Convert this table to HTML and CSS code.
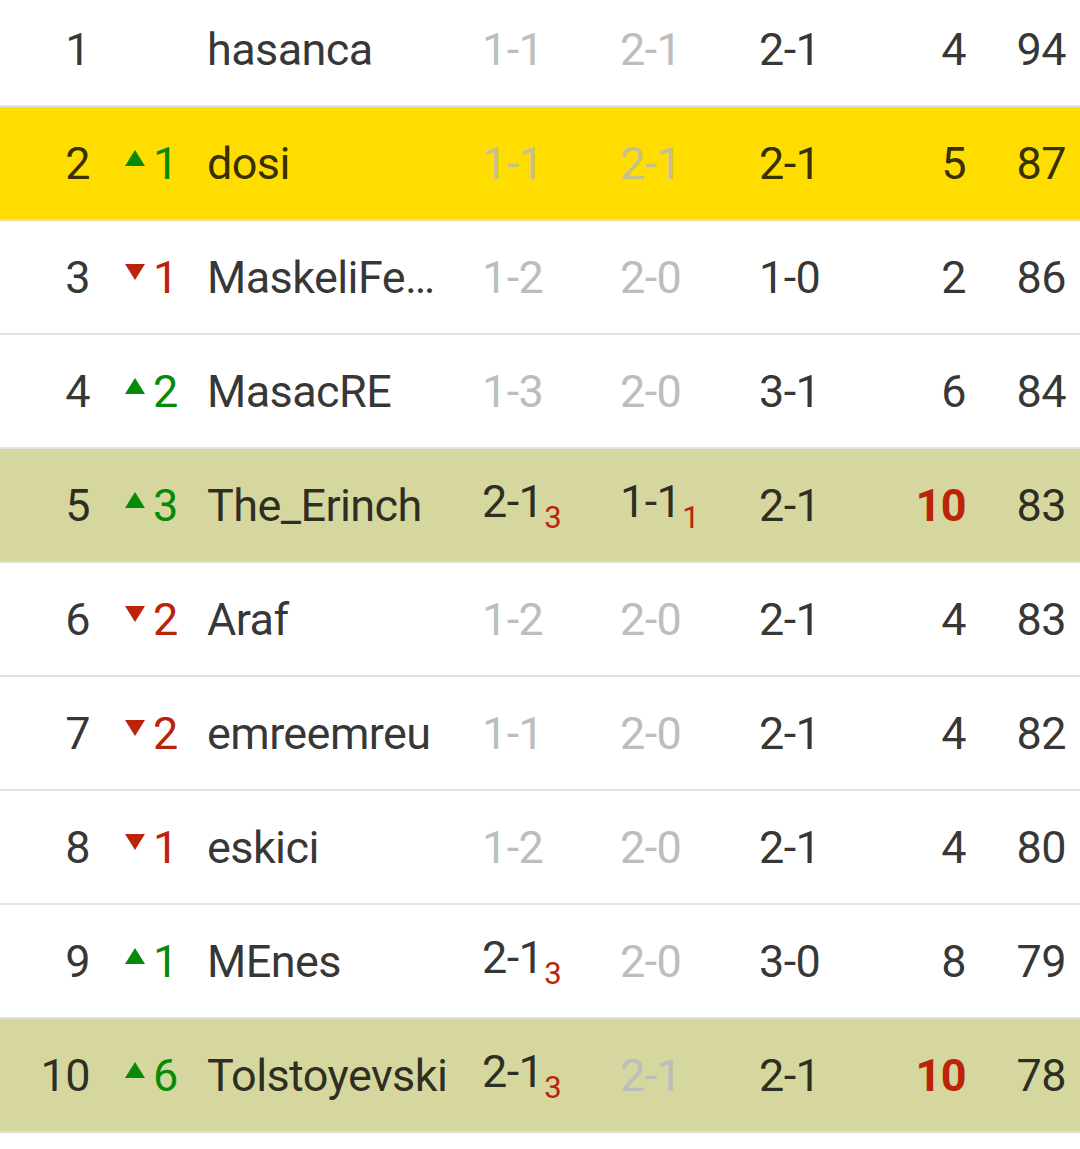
FILE: index.html
```html
<!DOCTYPE html>
<html>
<head>
<meta charset="utf-8">
<link rel="stylesheet" href="styles.css">
</head>
<body>
<div class="table">
  <div class="row">
    <div class="rank">1</div><div class="chg"></div><div class="name">hasanca</div>
    <div class="sc dim">1-1</div><div class="sc dim">2-1</div><div class="sc">2-1</div>
    <div class="pts">4</div><div class="tot">94</div>
  </div>
  <div class="row me">
    <div class="rank">2</div><div class="chg up"><svg class="tri" viewBox="0 0 20 16"><polygon points="10,0 20,16 0,16"/></svg>1</div><div class="name">dosi</div>
    <div class="sc dim">1-1</div><div class="sc dim">2-1</div><div class="sc">2-1</div>
    <div class="pts">5</div><div class="tot">87</div>
  </div>
  <div class="row">
    <div class="rank">3</div><div class="chg down"><svg class="tri" viewBox="0 0 20 16"><polygon points="0,0 20,0 10,16"/></svg>1</div><div class="name trunc">MaskeliFener</div>
    <div class="sc dim">1-2</div><div class="sc dim">2-0</div><div class="sc">1-0</div>
    <div class="pts">2</div><div class="tot">86</div>
  </div>
  <div class="row">
    <div class="rank">4</div><div class="chg up"><svg class="tri" viewBox="0 0 20 16"><polygon points="10,0 20,16 0,16"/></svg>2</div><div class="name">MasacRE</div>
    <div class="sc dim">1-3</div><div class="sc dim">2-0</div><div class="sc">3-1</div>
    <div class="pts">6</div><div class="tot">84</div>
  </div>
  <div class="row best">
    <div class="rank">5</div><div class="chg up"><svg class="tri" viewBox="0 0 20 16"><polygon points="10,0 20,16 0,16"/></svg>3</div><div class="name">The_Erinch</div>
    <div class="sc">2-1<span class="sub">3</span></div><div class="sc">1-1<span class="sub">1</span></div><div class="sc">2-1</div>
    <div class="pts hot">10</div><div class="tot">83</div>
  </div>
  <div class="row">
    <div class="rank">6</div><div class="chg down"><svg class="tri" viewBox="0 0 20 16"><polygon points="0,0 20,0 10,16"/></svg>2</div><div class="name">Araf</div>
    <div class="sc dim">1-2</div><div class="sc dim">2-0</div><div class="sc">2-1</div>
    <div class="pts">4</div><div class="tot">83</div>
  </div>
  <div class="row">
    <div class="rank">7</div><div class="chg down"><svg class="tri" viewBox="0 0 20 16"><polygon points="0,0 20,0 10,16"/></svg>2</div><div class="name">emreemreu</div>
    <div class="sc dim">1-1</div><div class="sc dim">2-0</div><div class="sc">2-1</div>
    <div class="pts">4</div><div class="tot">82</div>
  </div>
  <div class="row">
    <div class="rank">8</div><div class="chg down"><svg class="tri" viewBox="0 0 20 16"><polygon points="0,0 20,0 10,16"/></svg>1</div><div class="name">eskici</div>
    <div class="sc dim">1-2</div><div class="sc dim">2-0</div><div class="sc">2-1</div>
    <div class="pts">4</div><div class="tot">80</div>
  </div>
  <div class="row">
    <div class="rank">9</div><div class="chg up"><svg class="tri" viewBox="0 0 20 16"><polygon points="10,0 20,16 0,16"/></svg>1</div><div class="name">MEnes</div>
    <div class="sc">2-1<span class="sub">3</span></div><div class="sc dim">2-0</div><div class="sc">3-0</div>
    <div class="pts">8</div><div class="tot">79</div>
  </div>
  <div class="row best">
    <div class="rank">10</div><div class="chg up"><svg class="tri" viewBox="0 0 20 16"><polygon points="10,0 20,16 0,16"/></svg>6</div><div class="name">Tolstoyevski</div>
    <div class="sc">2-1<span class="sub">3</span></div><div class="sc dim">2-1</div><div class="sc">2-1</div>
    <div class="pts hot">10</div><div class="tot">78</div>
  </div>
</div>
</body>
</html>
```

FILE: styles.css
```css
html, body {
  margin: 0;
  padding: 0;
  background: #ffffff;
}
body {
  font-family: Roboto, "Noto Sans", sans-serif;
  font-size: 45px;
  letter-spacing: -0.6px;
  color: rgba(0, 0, 0, 0.8);
  overflow: hidden;
}
.table {
  margin-top: -7px;
}
.row {
  display: grid;
  grid-template-columns: 90px 35px 82px 275px 138px 139px 140px 67px 100px 14px;
  align-items: center;
  height: 112px;
  padding-top: 2px;
  box-sizing: border-box;
  height: 114px;
  border-bottom: 2px solid #e2e2e2;
  white-space: nowrap;
  line-height: 1.3;
}
.row > .rank { grid-column: 1; text-align: right; }
.row > .chg { grid-column: 3; display: flex; align-items: center; }
.row > .name { grid-column: 4; }
.row > .trunc { overflow: hidden; text-overflow: ellipsis; padding-right: 30px; }
.row > .sc:nth-of-type(4) { grid-column: 5; }
.row > .sc:nth-of-type(5) { grid-column: 6; }
.row > .sc:nth-of-type(6) { grid-column: 7; }
.row > .pts { grid-column: 8; text-align: right; }
.row > .tot { grid-column: 9; text-align: right; }

.me { background: #ffdd00; border-bottom-color: #e8dd9c; }
.best { background: #d5d79f; border-bottom-color: #dfe0d0; }

.tri {
  width: 20px;
  height: 16px;
  margin-top: -12px;
  margin-right: 8px;
  flex: none;
}
.up { color: #078a07; }
.up .tri { fill: #078a07; }
.down { color: #bb2408; }
.down .tri { fill: #bb2408; }

.dim { color: #bdbdbd; }
.me .dim { color: #c6c08c; }

.sub {
  font-size: 31px;
  color: #bb2408;
  vertical-align: -11px;
  margin-left: 1px;
}
.hot {
  color: #bb2408;
  font-weight: 700;
}
```
